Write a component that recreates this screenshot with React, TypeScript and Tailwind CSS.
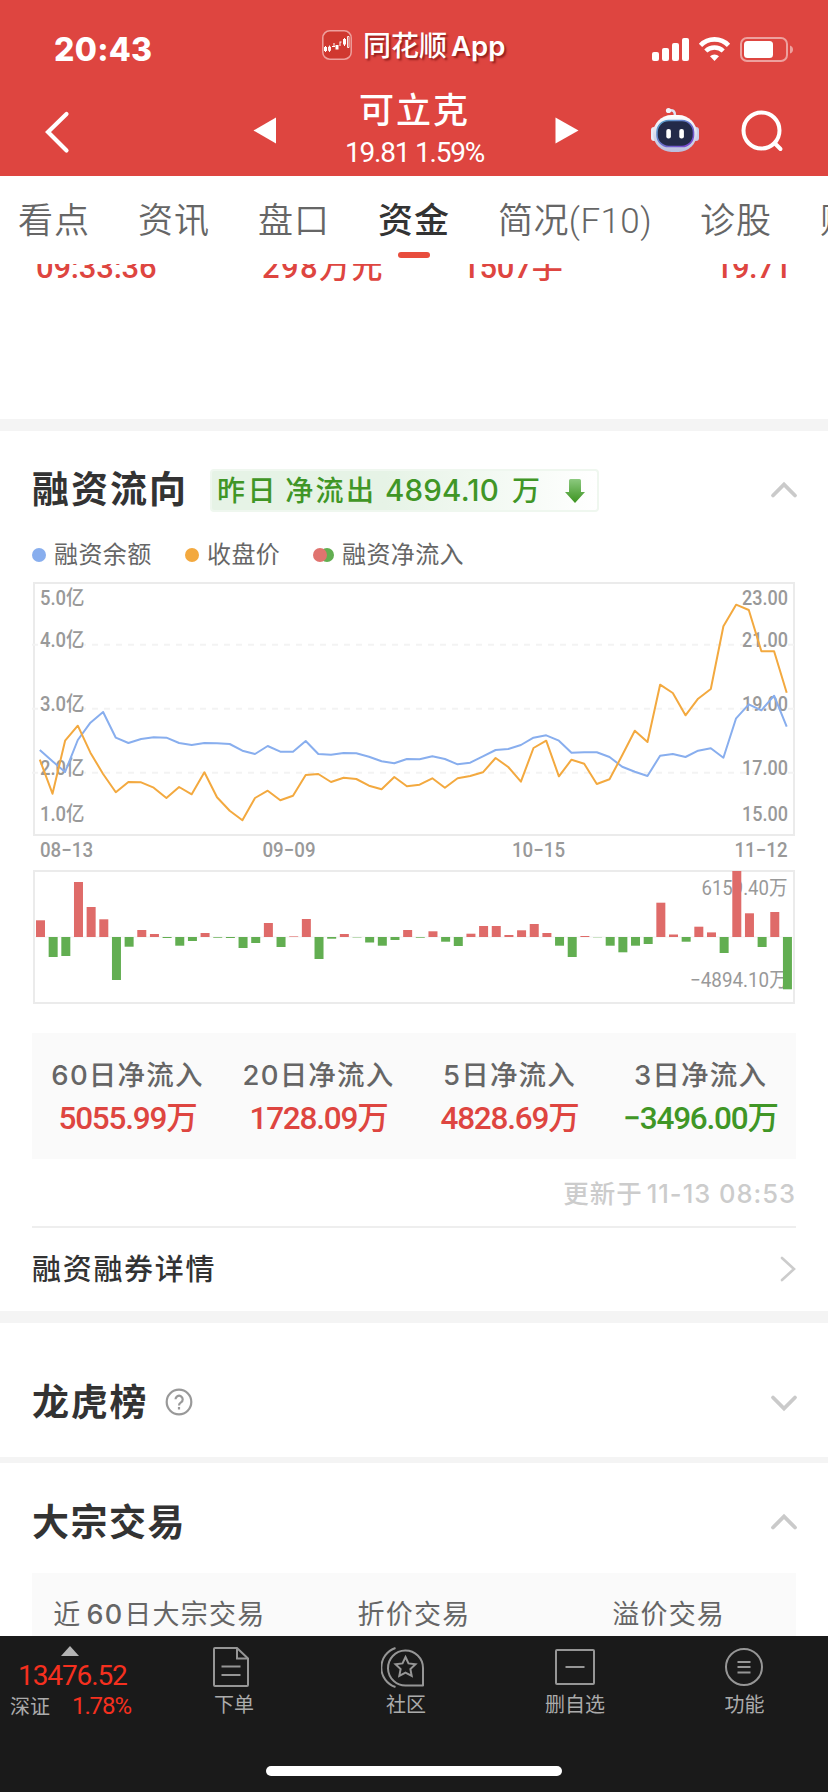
import React from 'react';

const balance = [
  750, 761.3, 772, 740, 722.7, 712, 737.7, 743, 739, 737.3, 737.7, 743, 745, 743, 743.3, 744, 750.7, 754, 746, 751.7,
  751.7, 741, 754, 754.7, 753, 753.3, 756.7, 761.3, 763.3, 759, 759.3, 756.3, 759, 764.3, 762.7, 756.3, 750, 749, 745, 737.7,
  735.3, 740.7, 752.7, 752.3, 752.3, 757, 766.7, 771.7, 776, 755.7, 754, 757, 750.7, 748.3, 757.7, 718.3, 704.3, 710.3, 695.7, 726.7,
];

const price = [
  759.7, 793.7, 740.7, 725.7, 752.7, 774, 792.3, 782, 782.3, 787.7, 798, 787, 794.3, 772.3, 797.3, 810.7, 820.3, 798, 790.7, 800.3,
  795.7, 775, 774, 782, 777.7, 779, 785.7, 789.3, 777, 786.3, 784.7, 778.3, 787.7, 778.3, 776, 772.3, 758, 767, 781.7, 748,
  740.7, 776.3, 759.7, 763.7, 784, 779.3, 755.3, 730.7, 742, 684.7, 693, 715.3, 698.7, 689, 626.3, 604.7, 610, 651.3, 651.3, 692.7,
];

// signed bar heights, positive is inflow
const flow = [
  16.7, -20, -19, 55, 30, 17.7, -43, -9.7, 7, 3, -1, -8.7, -4, 4, -0.7, -1, -11, -6, 14, -10,
  0.6, 18, -22, -1.7, 3, -0.4, -5.5, -8.7, -3, 7, -0.7, 5.7, -4.7, -9, 3.3, 11, 11, 2, 6.7, 13,
  4, -8.7, -20, 1, -0.3, -8.7, -15.3, -8.7, -7, 34.3, 2.5, -4.7, 10.3, 4.6, -16, 66, 23.7, -10, 25, -52.3,
];

const toPoints = (ys: number[]) => ys.map((y, i) => `${(39.8 + i * 12.66).toFixed(1)},${y}`).join(' ');

const tabs = ['看点', '资讯', '盘口', '资金', '简况(F10)', '诊股', '财务'];

const stats = [
  { label: '60日净流入', value: '5055.99万', up: true },
  { label: '20日净流入', value: '1728.09万', up: true },
  { label: '5日净流入', value: '4828.69万', up: true },
  { label: '3日净流入', value: '-3496.00万', up: false },
];

const leftAxis = [
  { y: 605, text: '5.0亿' },
  { y: 647.3, text: '4.0亿' },
  { y: 711, text: '3.0亿' },
  { y: 775, text: '2.0亿' },
  { y: 821, text: '1.0亿' },
];

const rightAxis = [
  { y: 605, text: '23.00' },
  { y: 647, text: '21.00' },
  { y: 711, text: '19.00' },
  { y: 775, text: '17.00' },
  { y: 821, text: '15.00' },
];

const Chevron: React.FC<{ down?: boolean }> = ({ down }) => (
  <svg className="w-7 h-5" viewBox="0 0 28 20" fill="none" stroke="#cacaca" strokeWidth="3.8" strokeLinecap="round">
    <path d={down ? 'M3 4.5l11 11 11-11' : 'M3 15.5l11-11 11 11'} strokeLinejoin="miter" />
  </svg>
);

const StatusBar = () => (
  <div className="flex h-[82px] items-start relative">
    <div className="ml-[54px] mt-[30px] h-10 w-[268px] font-['Inter',sans-serif] text-[32px] leading-10 font-extrabold tracking-[0.300px]">20:43</div>
    <svg className="mt-[30px] w-[30px] h-[30px]" viewBox="0 0 30 30">
      <rect x="0.8" y="0.8" width="28.4" height="28.4" rx="7" fill="#d03830" stroke="#eea09d" strokeWidth="1.5" />
      <g fill="#fff">
        <rect x="2" y="17" width="3" height="4" />
        <rect x="10" y="16" width="3" height="1" />
        <rect x="13.5" y="15" width="3" height="4.5" />
        <rect x="21" y="9" width="3" height="5.5" />
        <path d="M11.500 13h1v3h-1zM17.500 11.500h2v1h-1v3.500h-1zM3 16h1v6H3zM22 8h1v8h-1z" />
      </g>
      <path d="M6.500 17h2v3.500h-2zM7.500 15.500v6.500M25.500 6.500h1.500v11h-1.500z" fill="none" stroke="#fff" strokeWidth="0.9" />
    </svg>
    <div className="ml-[11px] mt-[26px] w-[289px] h-10 leading-10 text-[28px] font-medium whitespace-nowrap [text-shadow:2px_2px_2px_rgba(90,0,0,0.55)]">
      同花顺<span className="ml-1 font-['Inter',sans-serif] text-[27.500px] font-semibold">App</span>
    </div>
    <svg className="mt-[36px] w-[142px] h-[28px]" viewBox="653 36 142 28" fill="#fff">
      <rect x="653" y="52" width="7" height="9" rx="2" />
      <rect x="663" y="48" width="7" height="13" rx="2" />
      <rect x="673" y="43" width="7" height="18" rx="2" />
      <rect x="683" y="38" width="7" height="23" rx="2" />
      <g fill="none" stroke="#fff">
        <path d="M701.500 45.300a19.500 19.500 0 0 1 28 0" strokeWidth="4.600" />
        <path d="M706.800 51a12.400 12.400 0 0 1 17.400 0" strokeWidth="4.400" />
      </g>
      <path d="M711 56.300a6.500 6.500 0 0 1 9 0l-4.500 4.700z" />
      <rect x="742" y="38" width="46" height="23" rx="6" fill="none" stroke="#eda19e" strokeWidth="2" />
      <rect x="745" y="41" width="29" height="17" rx="3.500" />
      <path d="M791 45.500q3 1 3 4t-3 4z" fill="#eda19e" />
    </svg>
  </div>
);

const TitleBar = () => (
  <div className="flex h-[94px] items-start">
    <svg className="ml-[42px] mt-[26px] w-[30px] h-[48px]" viewBox="0 0 30 48" fill="none" stroke="#fff" strokeWidth="4.200" strokeLinecap="round">
      <path d="M24.500 6L6 24l18.500 18.500" />
    </svg>
    <svg className="ml-[181px] mt-[35px] w-[24px] h-[27px]" viewBox="0 0 24 27">
      <path d="M23 0.500v26L0.500 13.500z" fill="#fff" />
    </svg>
    <div className="w-[278px] pr-[3px] text-center">
      <div className="mt-[6px] h-[48px] leading-[48px] text-[35px] font-medium tracking-[2px]">可立克</div>
      <div className="mt-[2px] h-[30px] leading-[30px] text-[28px] tracking-[-1.200px] whitespace-nowrap">19.81 1.59%</div>
    </div>
    <svg className="mt-[35px] w-[24px] h-[27px]" viewBox="0 0 24 27">
      <path d="M0.500 0.500v26L23.500 13.500z" fill="#fff" />
    </svg>
    <svg className="ml-[71px] mt-[24px] w-[50px] h-[48px]" viewBox="650 106 50 48">
      <defs>
        <linearGradient id="head" x1="0" y1="0" x2="0" y2="1">
          <stop offset="0" stopColor="#fff" />
          <stop offset="1" stopColor="#b9bede" />
        </linearGradient>
        <linearGradient id="rim" x1="0" y1="0" x2="1" y2="1">
          <stop offset="0" stopColor="#58a6c9" />
          <stop offset="1" stopColor="#7a3fd0" />
        </linearGradient>
      </defs>
      <path d="M669 110.500q6-1.500 6 5" fill="none" stroke="#dfe2f2" strokeWidth="2.600" />
      <circle cx="668.500" cy="110.500" r="2.600" fill="#f2f3fb" />
      <rect x="651" y="127" width="6" height="14" rx="3" fill="#e9ebf7" />
      <rect x="693" y="127" width="6" height="14" rx="3" fill="#c9cdea" />
      <rect x="653" y="115" width="44" height="37" rx="18.500" fill="url(#head)" />
      <rect x="657" y="120.500" width="36.500" height="26" rx="11.500" fill="#232a49" stroke="url(#rim)" strokeWidth="1.600" />
      <rect x="666.300" y="129" width="4.600" height="9.500" rx="2" fill="#fff" />
      <rect x="679.300" y="129" width="4.600" height="9.500" rx="2" fill="#fff" />
    </svg>
    <svg className="ml-[41px] mt-[27px] w-[44px] h-[46px]" viewBox="741 109 44 46" fill="none" stroke="#fff" strokeWidth="4" strokeLinecap="round">
      <circle cx="761.500" cy="130.500" r="18" />
      <path d="M775 143.500l5.500 5.500" />
    </svg>
  </div>
);

const FlowChart = () => (
  <svg className="block w-[828px] h-[440px]" viewBox="0 570 828 440">
    <g fill="none" stroke="#ebebeb" strokeWidth="2">
      <rect x="34" y="583" width="760" height="252" />
      <rect x="34" y="871" width="760" height="132" />
    </g>
    <g stroke="#f3f3f3" strokeWidth="2" strokeDasharray="6 6">
      <path d="M32 644.700h762M32 708.700h762M32 772.700h762" />
    </g>
    <path d="M34 937h760" stroke="#f3f3f3" strokeWidth="1" />

    <g fill="#999" fontSize="20.500" fontWeight="500" fontFamily="Roboto, 'Noto Sans CJK SC', sans-serif">
      {leftAxis.map((a) => (
        <text key={a.text} x="40" y={a.y} textLength="44.500" lengthAdjust="spacingAndGlyphs">{a.text}</text>
      ))}
      {rightAxis.map((a) => (
        <text key={a.text} x="742" y={a.y} textLength="46" lengthAdjust="spacingAndGlyphs">{a.text}</text>
      ))}
      <text x="40" y="857" textLength="53" lengthAdjust="spacingAndGlyphs">08−13</text>
      <text x="262.500" y="857" textLength="53" lengthAdjust="spacingAndGlyphs">09−09</text>
      <text x="512" y="857" textLength="53" lengthAdjust="spacingAndGlyphs">10−15</text>
      <text x="734.500" y="857" textLength="53" lengthAdjust="spacingAndGlyphs">11−12</text>
      <text x="701.500" y="895" textLength="86" lengthAdjust="spacingAndGlyphs" fontWeight="400">6159.40万</text>
      <text x="690" y="987" textLength="98" lengthAdjust="spacingAndGlyphs" fontWeight="400">−4894.10万</text>
    </g>

    <g fill="none" strokeWidth="2" strokeLinejoin="round">
      <polyline points={toPoints(balance)} stroke="#88aeee" />
      <polyline points={toPoints(price)} stroke="#f3a93f" />
    </g>

    {flow.map((h, i) => (
      <rect
        key={i}
        x={36 + i * 12.66}
        y={h > 0 ? 937 - h : 937}
        width="9"
        height={Math.abs(h)}
        fill={h > 0 ? '#df6b69' : '#62ae51'}
      />
    ))}
  </svg>
);

const BottomBar = () => (
  <footer className="h-[156px] bg-[#1a1a1a] text-[#ababab] flex flex-col">
    <div className="flex h-[130px] text-[20px] leading-6">
      <div className="w-[145px] pt-[10px]">
        <svg className="ml-[61px] w-[18px] h-[10px]" viewBox="0 0 18 10">
          <path d="M9 0l9 10H0z" fill="#b4b4b4" />
        </svg>
        <div className="ml-[18px] mt-[5px] h-[30px] leading-[30px] text-[28px] tracking-[-1.100px] text-[#f5301f] whitespace-nowrap">13476.52</div>
        <div className="flex ml-[10px] mt-[2px] h-[28px] leading-[28px]">
          <span className="w-[62px]">深证</span>
          <span className="text-[24px] tracking-[-1.100px] text-[#f5301f] -mt-px">1.78%</span>
        </div>
      </div>
      <div className="w-[172px] pt-[9px] flex flex-col items-center">
        <svg className="w-[40px] h-[44px]" viewBox="0 0 40 44" fill="none" stroke="#969696" strokeWidth="2">
          <path d="M4 3h22l11 10.500V40q0 1-1 1H4q-1 0-1-1V4q0-1 1-1z" />
          <path d="M26 3v10.500h11M10.500 21.500h19M10.500 30h19" />
        </svg>
        <div className="pl-[6px] mt-[4px]">下单</div>
      </div>
      <div className="w-[172px] pt-[9px] flex flex-col items-center">
        <svg className="w-[44px] h-[44px]" viewBox="0 0 44 44" fill="none" stroke="#969696" strokeWidth="2">
          <path d="M42 40.500H25.500A17.500 17.500 0 1 1 42 23z" strokeLinejoin="round" />
          <path d="M14.500 3a20.500 20.500 0 0 0 0 39" />
          <path d="M24.500 12l3 6.400 7 .900-5.100 4.800 1.300 6.900-6.200-3.300-6.200 3.300 1.300-6.900-5.100-4.800 7-.900z" />
        </svg>
        <div className="pl-[6px] mt-[4px]">社区</div>
      </div>
      <div className="w-[172px] pt-[9px] flex flex-col items-center">
        <svg className="w-[44px] h-[44px]" viewBox="0 0 44 44" fill="none" stroke="#969696" strokeWidth="2">
          <rect x="3" y="5" width="38" height="34" rx="1" />
          <path d="M12.500 22h19" />
        </svg>
        <div className="mt-[4px]">删自选</div>
      </div>
      <div className="w-[165px] pt-[9px] flex flex-col items-center">
        <svg className="w-[44px] h-[44px]" viewBox="0 0 44 44" fill="none" stroke="#969696" strokeWidth="2">
          <circle cx="22" cy="22" r="18" />
          <path d="M15.500 17h13M15.500 22h13M15.500 27.500h13" />
        </svg>
        <div className="mt-[4px] pl-[2px]">功能</div>
      </div>
    </div>
    <div className="mx-auto w-[296px] h-[10px] rounded-full bg-white" />
  </footer>
);

const App: React.FC = () => {
  return (
    <main className="w-[828px] h-[1792px] overflow-hidden bg-white text-[#333] flex flex-col font-['Roboto','Noto_Sans_CJK_SC',sans-serif]">
      <header className="h-[176px] bg-[#de4540] text-white">
        <StatusBar />
        <TitleBar />
      </header>

      {/* Tabs */}
      <nav className="h-[88px] pl-[18px] flex gap-[48px] overflow-hidden whitespace-nowrap text-[35px] leading-[48px] text-[#666]">
        {tabs.map((t) => (
          <div key={t} className="shrink-0 pt-[22px] flex flex-col items-center">
            <span className={t === '资金' ? 'tracking-[1px] font-medium text-[#333]' : t === '简况(F10)' ? 'tracking-[0.400px] font-[350]' : 'tracking-[1px] font-[350]'}>{t}</span>
            {t === '资金' && <span className="mt-[6px] w-[32px] h-[6px] rounded-full bg-[#e84d3d]" />}
          </div>
        ))}
      </nav>

      {/* Scrolled-away trade row */}
      <div className="h-[155px] overflow-hidden text-[#de4540]">
        <div className="-mt-[15px] flex h-[38px] leading-[38px] text-[31px] font-medium pl-[36px] pr-[37px] whitespace-nowrap">
          <span className="w-[226px] tracking-[-0.200px]">09:33:36</span>
          <span className="w-[200px] tracking-[1.400px]">298万元</span>
          <span className="flex-1 tracking-[-0.200px]">1507手</span>
          <span className="tracking-[-0.600px]">19.71</span>
        </div>
      </div>

      <div className="h-3 bg-[#f4f4f4]" />

      {/* Margin flow */}
      <section className="h-[880px]">
        <div className="flex h-[139px] items-start pl-8 pt-[34px]">
          <h2 className="w-[178px] text-[37px] leading-[52px] font-bold tracking-[2px]">融资流向</h2>
          <div className="mt-[4px] w-[389px] h-[43px] rounded-[4px] border-2 border-[#eff7ef] bg-gradient-to-r from-[#e6f3e6] from-45% to-white flex items-center text-[#409626] text-[28px] leading-[39px] font-medium whitespace-nowrap">
            <span className="ml-[5px] w-[168px] pt-px tracking-[2.400px] [word-spacing:-2px]">昨日 净流出</span>
            <span className="w-[127px] font-['Inter',sans-serif] text-[29.500px] tracking-[0.200px]">4894.10</span>
            <span className="pt-px">万</span>
            <svg className="ml-[25px] w-[20px] h-[24px]" viewBox="0 0 20 24">
              <defs>
                <linearGradient id="arrow" x1="0" y1="0" x2="0" y2="1">
                  <stop offset="0" stopColor="#8cc97f" />
                  <stop offset="1" stopColor="#3b931f" />
                </linearGradient>
              </defs>
              <path d="M5.500 0h9q1.500 0 1.500 1.500V13h4L10 24 0 13h4V1.500Q4 0 5.500 0z" fill="url(#arrow)" />
            </svg>
          </div>
          <div className="ml-[171px] mt-[15px]"><Chevron /></div>
        </div>

        <div className="-mt-[32px] mb-[-1px] flex items-center h-[33px] pl-8 text-[24px] tracking-[0.400px] text-[#666]">
          <i className="w-[14px] h-[14px] rounded-full bg-[#88aeee]" />
          <span className="ml-2 w-[131px]">融资余额</span>
          <i className="w-[14px] h-[14px] rounded-full bg-[#f3a93f]" />
          <span className="ml-2 w-[106px]">收盘价</span>
          <i className="z-10 w-[14px] h-[14px] rounded-full bg-[#e0736f]" />
          <i className="-ml-[7px] w-[14px] h-[14px] rounded-full bg-[#62ae51]" />
          <span className="ml-2">融资净流入</span>
        </div>

        <FlowChart />

        <div className="mt-[23px] mx-8 h-[126px] pt-[23px] bg-[#fafafa] grid grid-cols-4 text-center whitespace-nowrap">
          {stats.map((s) => (
            <div key={s.label}>
              <div className="h-[41px] leading-[38px] text-[27.500px] tracking-[1.200px] text-[#666] font-['Inter','Noto_Sans_CJK_SC',sans-serif] font-medium">{s.label}</div>
              <div className={s.up ? 'h-[44px] leading-[44px] text-[31.500px] font-medium tracking-[-1.200px] text-[#de4540]' : 'h-[44px] leading-[44px] text-[31.500px] font-medium tracking-[-1.200px] text-[#409626]'}>
                {s.value.replace('-', '−')}
              </div>
            </div>
          ))}
        </div>

        <div className="mx-8 h-[69px] leading-[69px] text-right text-[25.500px] tracking-[1px] text-[#ccc] border-b-2 border-[#eee] font-['Inter','Noto_Sans_CJK_SC',sans-serif] font-medium">
          更新于<span className="ml-[4px]">11-13 08:53</span>
        </div>

        <div className="mx-8 h-[82px] flex items-center justify-between">
          <span className="pt-[3px] text-[29px] tracking-[1.700px] font-medium">融资融券详情</span>
          <svg className="w-[16px] h-[26px]" viewBox="0 0 16 26" fill="none" stroke="#ccc" strokeWidth="2.600" strokeLinecap="round">
            <path d="M2 2l12 11L2 24" />
          </svg>
        </div>
      </section>

      <div className="h-3 bg-[#f4f4f4]" />

      <section className="h-[134px] pt-[26px] pl-8 pr-[30px] flex items-center">
        <h2 className="pt-[2px] text-[37px] leading-[52px] font-bold tracking-[1.800px]">龙虎榜</h2>
        <svg className="ml-[17px] -mt-[3px] w-[28px] h-[28px]" viewBox="0 0 28 28" fill="none" stroke="#999" strokeWidth="2.200">
          <circle cx="14" cy="14" r="12.300" />
          <path d="M10.500 11.300a3.600 3.600 0 1 1 5.500 3.100q-2 1.300-2 3M14 19v2.600" />
        </svg>
        <div className="ml-auto"><Chevron down /></div>
      </section>

      <div className="h-[6px] bg-[#f4f4f4]" />

      <section className="h-[173px] shrink-0 overflow-hidden">
        <div className="h-[110px] pt-[8px] pl-8 pr-[30px] flex items-center justify-between">
          <h2 className="pt-[3px] text-[37px] leading-[52px] font-bold tracking-[1.500px]">大宗交易</h2>
          <Chevron />
        </div>
        <div className="mx-8 h-[63px] pt-[23px] bg-[#fafafa] grid grid-cols-3 text-center text-[27px] leading-[38px] tracking-[1.200px] text-[#666] whitespace-nowrap font-['Inter','Noto_Sans_CJK_SC',sans-serif]">
          <span>近<span className="ml-[5px] mr-px font-medium">60</span>日大宗交易</span>
          <span>折价交易</span>
          <span>溢价交易</span>
        </div>
      </section>

      <BottomBar />
    </main>
  );
};

export default App;
